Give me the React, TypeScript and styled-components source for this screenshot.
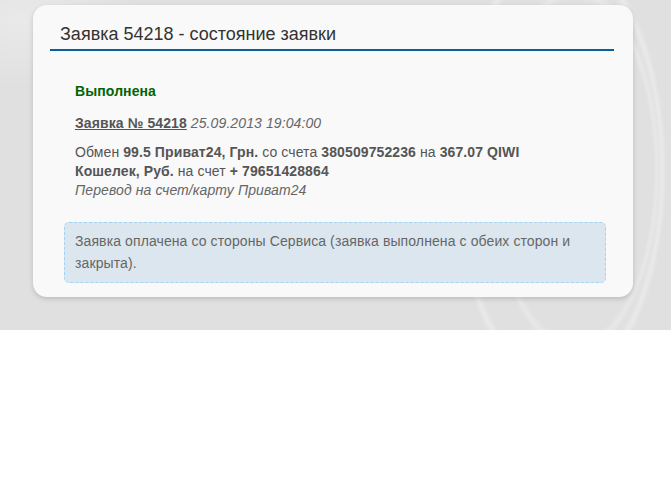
import React from "react";
import styled, { createGlobalStyle } from "styled-components";

const Global = createGlobalStyle`
  html, body { margin: 0; padding: 0; background: #ffffff; }
  body { font-family: "Liberation Sans", Arial, sans-serif; }
`;

const Backdrop = styled.div`
  height: 330px;
  box-sizing: border-box;
  padding: 5px 38px 0 33px;
  background:
    radial-gradient(ellipse 110px 230px at 560px 170px, transparent 89%, rgba(255,255,255,0.3) 93%, transparent 97%),
    radial-gradient(ellipse 88px 190px at 575px 170px, transparent 89%, rgba(255,255,255,0.25) 93%, transparent 97%),
    radial-gradient(ellipse 160px 90px at 20px 20px, rgba(255,255,255,0.3), transparent 75%),
    #e0e0e0;
`;

const Card = styled.div`
  width: 600px;
  height: 292px;
  box-sizing: border-box;
  background: #f9f9f9;
  border-radius: 14px;
  box-shadow: 0 2px 5px rgba(0, 0, 0, 0.16);
  padding: 17px 19px 0 17px;
`;

const Title = styled.h1`
  margin: 0;
  padding: 0 0 3px 10px;
  font-size: 18px;
  font-weight: normal;
  line-height: 24px;
  color: #333;
  border-bottom: 2px solid #0b5e9c;
`;

const Body = styled.div`
  padding: 31px 8px 0 14px;
  color: #555;
  font-size: 14px;
  letter-spacing: 0.1px;
`;

const Summary = styled.div`
  padding: 0 22px 0 11px;
`;

const Status = styled.div`
  color: #006400;
  font-weight: bold;
  line-height: 18px;
  margin-bottom: 14px;
`;

const OrderLine = styled.div`
  line-height: 18px;
  margin-bottom: 11px;
`;

const OrderLink = styled.a`
  color: #555;
  font-weight: bold;
  text-decoration: underline;
`;

const Date = styled.em`
  color: #666;
`;

const Details = styled.p`
  margin: 0;
  line-height: 19px;
  b { color: #555; }
`;

const Note = styled.em`
  display: block;
  color: #666;
`;

const Info = styled.div`
  margin-top: 22px;
  padding: 7px 10px 8px 10px;
  min-height: 60px;
  box-sizing: border-box;
  background: #dce6ee;
  border: 1px dashed #9fd6f7;
  border-radius: 5px;
  color: #666;
  line-height: 22px;
`;

export default function App() {
  return (
    <>
      <Global />
      <Backdrop>
        <Card>
          <Title>Заявка 54218 - состояние заявки</Title>
          <Body>
            <Summary>
              <Status>Выполнена</Status>
              <OrderLine>
                <OrderLink href="#">Заявка № 54218</OrderLink>{" "}
                <Date>25.09.2013 19:04:00</Date>
              </OrderLine>
              <Details>
                Обмен <b>99.5 Приват24, Грн.</b> со счета <b>380509752236</b> на{" "}
                <b>367.07 QIWI Кошелек, Руб.</b> на счет <b>+ 79651428864</b>
                <Note>Перевод на счет/карту Приват24</Note>
              </Details>
            </Summary>
            <Info>
              Заявка оплачена со стороны Сервиса (заявка выполнена с обеих сторон и закрыта).
            </Info>
          </Body>
        </Card>
      </Backdrop>
    </>
  );
}
